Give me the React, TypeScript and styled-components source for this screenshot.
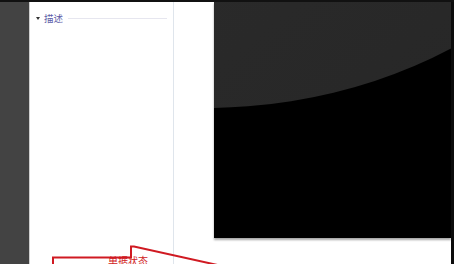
import React from 'react'
import styled, { createGlobalStyle } from 'styled-components'

const Global = createGlobalStyle`
html, body {
  margin: 0;
  padding: 0;
  background: #fff;
  overflow: hidden;
}
`

const Screen = styled.div`
position: relative;
width: 454px;
height: 264px;
display: flex;
flex-direction: column;
overflow: hidden;
font-family: "Noto Sans CJK SC", "Liberation Sans", sans-serif;
`

const TopBar = styled.div`
height: 2px;
background: #111;
flex: none;
`

const Body = styled.div`
flex: 1;
display: flex;
`

const Rail = styled.div`
width: 29px;
background: #434343;
border-right: 1px solid #cfcfcf;
flex: none;
`

const Panel = styled.div`
width: 144px;
background: #fff;
border-right: 1px solid #dfe5ec;
padding: 10px 0 0 6px;
box-sizing: border-box;
flex: none;
`

const Section = styled.div`
display: flex;
align-items: center;
gap: 3px;
height: 12px;
`

const Caret = styled.span`
width: 0;
height: 0;
border-left: 2.5px solid transparent;
border-right: 2.5px solid transparent;
border-top: 3px solid #333;
margin-right: 1px;
`

const SectionTitle = styled.span`
font-size: 9.5px;
color: #5c5ca8;
line-height: 12px;
`

const Rule = styled.span`
flex: 1;
height: 1px;
background: #e6e6ef;
margin: 0 6px 0 2px;
`

const Gap = styled.div`
width: 40px;
background: #fff;
flex: none;
`

const Preview = styled.div`
width: 237px;
height: 236px;
flex: none;
box-shadow: 0 2px 2px rgba(0, 0, 0, 0.35);
`

const Edge = styled.div`
flex: 1;
background: #0c0c0c;
`

const Callout = styled.svg`
position: absolute;
left: 0;
top: 0;
`

const CalloutText = styled.span`
position: absolute;
left: 108px;
top: 255px;
font-size: 10px;
color: #d01a22;
line-height: 12px;
`

const Gloss = () => (
  <svg width="237" height="236" viewBox="0 0 237 236">
    <defs>
      <linearGradient id="g" x1="0" y1="0" x2="1" y2="1">
        <stop offset="0" stopColor="#313131" />
        <stop offset="1" stopColor="#262626" />
      </linearGradient>
    </defs>
    <rect width="237" height="236" fill="#000" />
    <ellipse cx="-10" cy="-250" rx="446" ry="356" fill="url(#g)" />
  </svg>
)

const App = () => {
  return (
    <Screen>
      <Global />
      <TopBar />
      <Body>
        <Rail />
        <Panel>
          <Section>
            <Caret />
            <SectionTitle>描述</SectionTitle>
            <Rule />
          </Section>
        </Panel>
        <Gap />
        <Preview>
          <Gloss />
        </Preview>
        <Edge />
      </Body>
      <Callout width="454" height="264">
        <polyline
          points="53,266 53,257.5 131,257.5 131,246.5 134,246.5 222,266"
          fill="none"
          stroke="#d01a22"
          strokeWidth="2"
        />
      </Callout>
      <CalloutText>单据状态</CalloutText>
    </Screen>
  )
}

export default App
